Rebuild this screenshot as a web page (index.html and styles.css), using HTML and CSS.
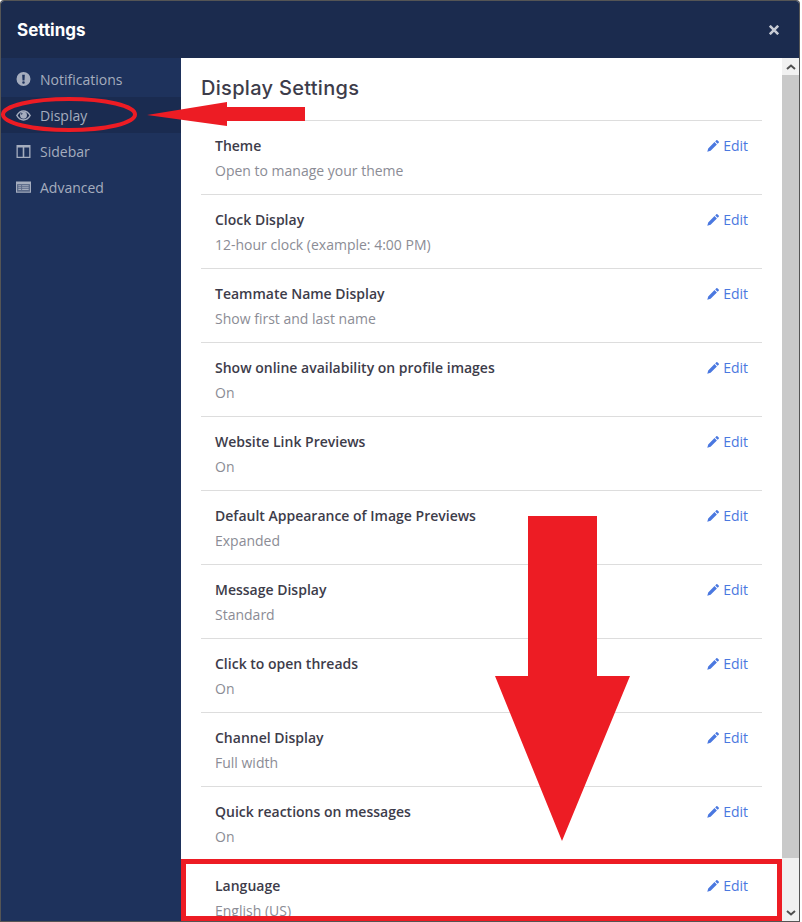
FILE: index.html
```html
<!DOCTYPE html>
<html lang="en">
<head>
<meta charset="utf-8">
<title>Settings</title>
<link rel="stylesheet" href="styles.css">
</head>
<body>
<svg class="defs" width="0" height="0">
  <symbol id="pencil" viewBox="0 0 12 12">
    <path d="M9.300.3a.8.8 0 0 1 1.100 0l1.300 1.300a.8.8 0 0 1 0 1.100L10.600 3.800 8.200 1.400zM7.500 2.100l2.400 2.400-6.300 6.300-3.300.9.900-3.300z"/>
  </symbol>
</svg>
<div class="modal">
  <header class="modal-header">
    <h1 class="modal-title">Settings</h1>
    <svg class="close" viewBox="0 0 10 10" width="10" height="10"><path d="M.8.800l8.400 8.400M9.200.800L.8 9.200"/></svg>
  </header>
  <div class="modal-body">
    <nav class="sidebar">
      <a class="nav-item">
        <svg class="nav-icon" viewBox="0 0 14 14" width="14" height="14"><path fill-rule="evenodd" d="M7 0a7 7 0 1 1 0 14A7 7 0 0 1 7 0zM5.700 2.700l.3 5.800h2l.3-5.800zM7 9.200a1.300 1.300 0 1 0 0 2.600 1.300 1.300 0 0 0 0-2.600z"/></svg>
        <span>Notifications</span>
      </a>
      <a class="nav-item active">
        <svg class="nav-icon" viewBox="0 0 16 11" width="16" height="11"><path fill-rule="evenodd" d="M0 5.500C2 1.800 5 0 8 0s6 1.800 8 5.500C14 9.200 11 11 8 11S2 9.200 0 5.500zM1.800 5.500C3 7.900 5.500 9.600 8 9.600s5-1.700 6.200-4.100C13 3.100 10.500 1.400 8 1.400S3 3.100 1.800 5.500z"/><path fill-rule="evenodd" d="M8 1.600a3.700 3.700 0 1 1 0 7.400 3.700 3.700 0 0 1 0-7.400zM6.800 2.900a1.500 1.500 0 0 0-1.500 1.500h1a.5.5 0 0 1 .5-.5z"/></svg>
        <span>Display</span>
      </a>
      <a class="nav-item">
        <svg class="nav-icon" viewBox="0 0 14 13" width="14" height="13"><path fill-rule="evenodd" d="M0 0h14v13H0zM1.300 2.500v9.200h4.900V2.500zM7.800 2.500v9.200h4.900V2.500z"/></svg>
        <span>Sidebar</span>
      </a>
      <a class="nav-item">
        <svg class="nav-icon" viewBox="0 0 16 12" width="16" height="12"><path fill-rule="evenodd" d="M0 0h16v12H0zM1.200 3v7.800h13.600V3z"/><path class="icon-shade" d="M1.200 3h13.600v7.800H1.200z"/><path d="M2.500 4.200h3v1h-3zM6.500 4.200h7v1h-7zM2.500 6.200h3v1h-3zM6.500 6.200h7v1h-7zM2.500 8.200h3v1h-3zM6.500 8.200h7v1h-7z"/></svg>
        <span>Advanced</span>
      </a>
    </nav>
    <main class="content">
      <h2 class="section-title">Display Settings</h2>
      <div class="rows">
        <section class="row"><div class="row-text"><h3>Theme</h3><p>Open to manage your theme</p></div><a class="edit"><svg width="12" height="12"><use href="#pencil"/></svg>Edit</a></section>
        <section class="row"><div class="row-text"><h3>Clock Display</h3><p>12-hour clock (example: 4:00 PM)</p></div><a class="edit"><svg width="12" height="12"><use href="#pencil"/></svg>Edit</a></section>
        <section class="row"><div class="row-text"><h3>Teammate Name Display</h3><p>Show first and last name</p></div><a class="edit"><svg width="12" height="12"><use href="#pencil"/></svg>Edit</a></section>
        <section class="row"><div class="row-text"><h3>Show online availability on profile images</h3><p>On</p></div><a class="edit"><svg width="12" height="12"><use href="#pencil"/></svg>Edit</a></section>
        <section class="row"><div class="row-text"><h3>Website Link Previews</h3><p>On</p></div><a class="edit"><svg width="12" height="12"><use href="#pencil"/></svg>Edit</a></section>
        <section class="row"><div class="row-text"><h3>Default Appearance of Image Previews</h3><p>Expanded</p></div><a class="edit"><svg width="12" height="12"><use href="#pencil"/></svg>Edit</a></section>
        <section class="row"><div class="row-text"><h3>Message Display</h3><p>Standard</p></div><a class="edit"><svg width="12" height="12"><use href="#pencil"/></svg>Edit</a></section>
        <section class="row"><div class="row-text"><h3>Click to open threads</h3><p>On</p></div><a class="edit"><svg width="12" height="12"><use href="#pencil"/></svg>Edit</a></section>
        <section class="row"><div class="row-text"><h3>Channel Display</h3><p>Full width</p></div><a class="edit"><svg width="12" height="12"><use href="#pencil"/></svg>Edit</a></section>
        <section class="row"><div class="row-text"><h3>Quick reactions on messages</h3><p>On</p></div><a class="edit"><svg width="12" height="12"><use href="#pencil"/></svg>Edit</a></section>
        <section class="row"><div class="row-text"><h3>Language</h3><p>English (US)</p></div><a class="edit"><svg width="12" height="12"><use href="#pencil"/></svg>Edit</a></section>
      </div>
    </main>
    <div class="scrollbar">
      <div class="scroll-btn"><svg viewBox="0 0 10 6" width="10" height="6"><path d="M1 5l4-3.500L9 5"/></svg></div>
      <div class="scroll-thumb"></div>
      <div class="scroll-track"></div>
      <div class="scroll-btn"><svg viewBox="0 0 10 6" width="10" height="6"><path d="M1 1l4 3.500L9 1"/></svg></div>
    </div>
  </div>
</div>
<svg class="annotations" viewBox="0 0 802 922" width="802" height="922">
  <ellipse class="mark-line" cx="69" cy="114.500" rx="66" ry="15.500"/>
  <path class="mark-fill" d="M147 115L227 102V107H305V121H227V126Z"/>
  <path class="mark-fill" d="M528 516H597V676H630L562 841L495 676H528Z"/>
  <rect class="mark-box" x="183.500" y="861.500" width="596" height="57"/>
</svg>
</body>
</html>
```

FILE: styles.css
```css
* { box-sizing: border-box; }
html, body { height: 100%; }
body {
  margin: 0;
  padding: 1px 3px 1px 1px;
  background: #fff;
  font-family: "Open Sans", sans-serif;
  font-size: 14px;
  color: #3d3c40;
  overflow: hidden;
}
.defs { position: absolute; }
.modal {
  height: 920px;
  display: flex;
  flex-direction: column;
  border-radius: 3px 3px 0 0;
  overflow: hidden;
  box-shadow: 0 0 0 1px #555;
}
.modal-header {
  height: 57px;
  flex: none;
  display: flex;
  align-items: center;
  justify-content: space-between;
  padding: 0 20px 0 16px;
  background: #1b2b4e;
}
.modal-title {
  margin: 0;
  font: 700 17px "Inter", sans-serif;
  color: #fff;
}
.close { fill: none; stroke: #c6cad3; stroke-width: 2.600; }
.modal-body { flex: 1; min-height: 0; display: flex; }
.sidebar {
  width: 180px;
  flex: none;
  padding-top: 3px;
  background: #1e325c;
}
.nav-item {
  height: 36px;
  display: flex;
  align-items: center;
  gap: 9px;
  padding-left: 15px;
  color: #a5adbe;
}
.nav-item.active { background: #1a2b50; }
.nav-icon { flex: none; width: 15px; fill: #a5adbe; }
.icon-shade { opacity: .45; }
.content {
  flex: 1;
  min-width: 0;
  overflow: hidden;
  padding: 0 20px;
  background: #fff;
}
.section-title {
  height: 63px;
  margin: 0;
  padding-top: 18px;
  font: 500 20px/24px "Inter", sans-serif;
  letter-spacing: .3px;
  color: #3d3c4a;
  border-bottom: 1px solid #ddd;
}
.row {
  height: 74px;
  display: flex;
  justify-content: space-between;
  padding: 15px 14px 0;
  border-bottom: 1px solid #ddd;
}
.row h3 { margin: 0; font-size: 14px; line-height: 19px; font-weight: 600; color: #3d3c4a; }
.row p { margin: 6px 0 0; line-height: 19px; color: #8b8c95; }
.edit {
  display: flex;
  align-items: center;
  gap: 4px;
  height: 19px;
  color: #4a78e0;
}
.edit svg { fill: #4a78e0; }
.scrollbar {
  width: 17px;
  flex: none;
  display: flex;
  flex-direction: column;
  background: #f1f1f1;
}
.scroll-btn {
  height: 17px;
  flex: none;
  display: flex;
  align-items: center;
  justify-content: center;
}
.scroll-btn svg { fill: none; stroke: #505050; stroke-width: 2; }
.scroll-thumb { height: 783px; flex: none; background: #c9c9c9; }
.scroll-track { flex: 1; }
.annotations { position: absolute; left: 0; top: 0; pointer-events: none; }
.mark-fill { fill: #ed1c24; }
.mark-line { fill: none; stroke: #ed1c24; stroke-width: 4; }
.mark-box { fill: none; stroke: #ed1c24; stroke-width: 5; }
```
